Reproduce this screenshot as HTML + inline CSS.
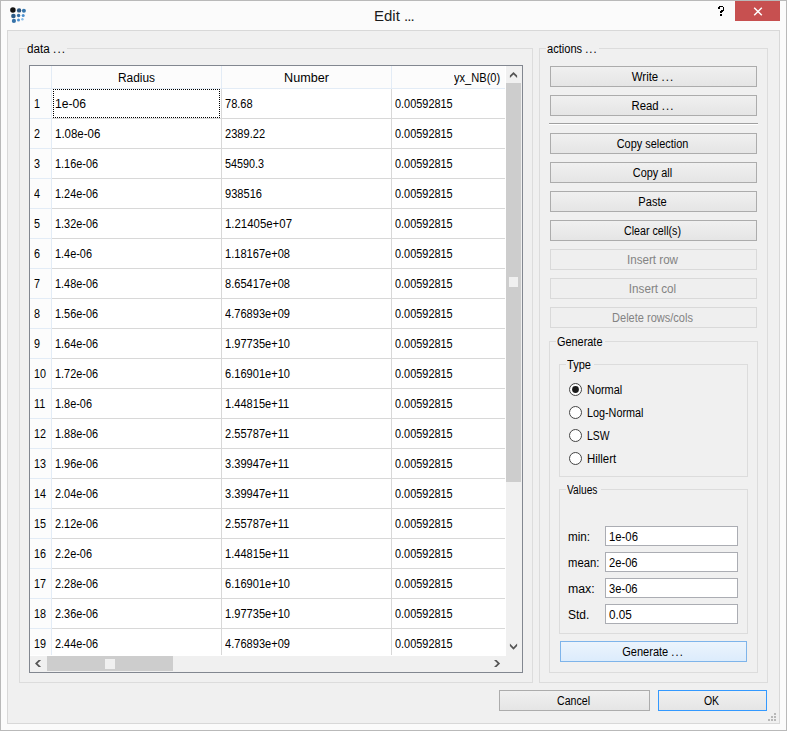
<!DOCTYPE html>
<html><head><meta charset="utf-8"><style>
html,body{margin:0;padding:0;width:787px;height:731px;overflow:hidden;background:#fbfbfb}
body>div{position:absolute}
.t{position:absolute;white-space:nowrap;font-family:"Liberation Sans",sans-serif;font-size:12px;line-height:15px;color:#000}
</style></head><body>
<div style="left:0px;top:0px;width:787px;height:731px;background:#fbfbfb;border:1px solid #b9b9b9;box-sizing:border-box"></div>
<svg width="787" height="40" style="position:absolute;left:0;top:0"><circle cx="12.9" cy="9.9" r="2.75" fill="#121212"/><circle cx="19.1" cy="10.4" r="2.2" fill="#2b5680"/><circle cx="23.9" cy="10.7" r="2.0" fill="#3676ac"/><circle cx="13.4" cy="16.0" r="2.3" fill="#2c5a86"/><circle cx="18.6" cy="15.5" r="1.7" fill="#336ea6"/><circle cx="23.2" cy="15.5" r="1.5" fill="#4a8fce"/><circle cx="13.9" cy="20.9" r="2.1" fill="#3672a8"/><circle cx="18.5" cy="20.0" r="1.5" fill="#4b8fcf"/><circle cx="22.4" cy="19.2" r="1.2" fill="#86bde9"/></svg>
<div class="t" style="left:374px;top:6px;font-size:15px;line-height:20px;color:#1b1b1b;">Edit <span style="letter-spacing:-0.9px">..</span>.</div>
<svg width="787" height="30" style="position:absolute;left:0;top:0" shape-rendering="crispEdges"><rect x="719" y="6" width="4" height="1" fill="#000"/><rect x="718" y="7" width="2" height="2" fill="#000"/><rect x="723" y="7" width="1" height="3" fill="#000"/><rect x="721" y="10" width="3" height="1" fill="#000"/><rect x="720" y="11" width="3" height="1" fill="#000"/><rect x="720" y="12" width="2" height="1" fill="#000"/><rect x="720" y="14" width="2" height="2" fill="#000"/></svg>
<div style="left:735px;top:1px;width:45px;height:20px;background:#c75050"></div>
<svg width="787" height="30" style="position:absolute;left:0;top:0"><path d="M754.2 7.8 L761.8 15.2 M761.8 7.8 L754.2 15.2" stroke="#fff" stroke-width="1.5"/></svg>
<div style="left:7px;top:30px;width:773px;height:694px;background:#f0f0f0;border:1px solid #d8d8d8;box-sizing:border-box"></div>
<svg width="787" height="731" style="position:absolute;left:0;top:0"><rect x="774" y="713" width="2" height="2" fill="#b8b8b8"/><rect x="771" y="716" width="2" height="2" fill="#b8b8b8"/><rect x="774" y="716" width="2" height="2" fill="#b8b8b8"/><rect x="768" y="719" width="2" height="2" fill="#b8b8b8"/><rect x="771" y="719" width="2" height="2" fill="#b8b8b8"/><rect x="774" y="719" width="2" height="2" fill="#b8b8b8"/></svg>
<div style="left:19px;top:48px;width:514px;height:635px;border:1px solid #dcdcdc;box-sizing:border-box"></div>
<div style="left:26px;top:47px;width:41px;height:3px;background:#f0f0f0"></div>
<div class="t" style="left:27px;top:42px;transform:scaleX(0.9730);transform-origin:0 0;">data <span style="letter-spacing:1.2px">..</span>.</div>
<div style="left:29px;top:65px;width:494px;height:608px;background:#fff;border:1px solid #828790;box-sizing:border-box"></div>
<div style="left:30px;top:66px;width:475px;height:23px;background:#fcfcfc"></div>
<div style="left:30px;top:88px;width:475px;height:1px;background:#e3ecf6"></div>
<div style="left:51px;top:66px;width:1px;height:22px;background:#e3ecf6"></div>
<div style="left:221px;top:66px;width:1px;height:22px;background:#e3ecf6"></div>
<div style="left:391px;top:66px;width:1px;height:22px;background:#e3ecf6"></div>
<div class="t" style="left:52px;top:71px;width:169px;text-align:center;transform:scaleX(0.9914);">Radius</div>
<div class="t" style="left:222px;top:71px;width:169px;text-align:center;transform:scaleX(1.0512);">Number</div>
<div class="t" style="left:454px;top:71px;transform:scaleX(0.9245);transform-origin:0 0;">yx_NB(0)</div>
<div style="left:30px;top:89px;width:21px;height:566px;background:#fcfcfc"></div>
<div style="left:51px;top:89px;width:1px;height:566px;background:#e3ecf6"></div>
<div style="left:30px;top:118px;width:21px;height:1px;background:#e3ecf6"></div>
<div style="left:52px;top:118px;width:453px;height:1px;background:#d8d8d8"></div>
<div class="t" style="left:34px;top:97px;transform:scaleX(0.8990);transform-origin:0 0;">1</div>
<div class="t" style="left:55px;top:97px;transform:scaleX(1.0107);transform-origin:0 0;">1e-06</div>
<div class="t" style="left:224.5px;top:97px;transform:scaleX(0.9207);transform-origin:0 0;">78.68</div>
<div class="t" style="left:395px;top:97px;transform:scaleX(0.9097);transform-origin:0 0;">0.00592815</div>
<div style="left:30px;top:148px;width:21px;height:1px;background:#e3ecf6"></div>
<div style="left:52px;top:148px;width:453px;height:1px;background:#d8d8d8"></div>
<div class="t" style="left:34px;top:127px;transform:scaleX(0.8990);transform-origin:0 0;">2</div>
<div class="t" style="left:55px;top:127px;transform:scaleX(0.9578);transform-origin:0 0;">1.08e-06</div>
<div class="t" style="left:224.5px;top:127px;transform:scaleX(0.9238);transform-origin:0 0;">2389.22</div>
<div class="t" style="left:395px;top:127px;transform:scaleX(0.9097);transform-origin:0 0;">0.00592815</div>
<div style="left:30px;top:178px;width:21px;height:1px;background:#e3ecf6"></div>
<div style="left:52px;top:178px;width:453px;height:1px;background:#d8d8d8"></div>
<div class="t" style="left:34px;top:157px;transform:scaleX(0.8990);transform-origin:0 0;">3</div>
<div class="t" style="left:55px;top:157px;transform:scaleX(0.9076);transform-origin:0 0;">1.16e-06</div>
<div class="t" style="left:224.5px;top:157px;transform:scaleX(0.8990);transform-origin:0 0;">54590.3</div>
<div class="t" style="left:395px;top:157px;transform:scaleX(0.9097);transform-origin:0 0;">0.00592815</div>
<div style="left:30px;top:208px;width:21px;height:1px;background:#e3ecf6"></div>
<div style="left:52px;top:208px;width:453px;height:1px;background:#d8d8d8"></div>
<div class="t" style="left:34px;top:187px;transform:scaleX(0.8990);transform-origin:0 0;">4</div>
<div class="t" style="left:55px;top:187px;transform:scaleX(0.9076);transform-origin:0 0;">1.24e-06</div>
<div class="t" style="left:224.5px;top:187px;transform:scaleX(0.9231);transform-origin:0 0;">938516</div>
<div class="t" style="left:395px;top:187px;transform:scaleX(0.9097);transform-origin:0 0;">0.00592815</div>
<div style="left:30px;top:238px;width:21px;height:1px;background:#e3ecf6"></div>
<div style="left:52px;top:238px;width:453px;height:1px;background:#d8d8d8"></div>
<div class="t" style="left:34px;top:217px;transform:scaleX(0.8990);transform-origin:0 0;">5</div>
<div class="t" style="left:55px;top:217px;transform:scaleX(0.9076);transform-origin:0 0;">1.32e-06</div>
<div class="t" style="left:224.5px;top:217px;transform:scaleX(0.9515);transform-origin:0 0;">1.21405e+07</div>
<div class="t" style="left:395px;top:217px;transform:scaleX(0.9097);transform-origin:0 0;">0.00592815</div>
<div style="left:30px;top:268px;width:21px;height:1px;background:#e3ecf6"></div>
<div style="left:52px;top:268px;width:453px;height:1px;background:#d8d8d8"></div>
<div class="t" style="left:34px;top:247px;transform:scaleX(0.8990);transform-origin:0 0;">6</div>
<div class="t" style="left:55px;top:247px;transform:scaleX(0.9090);transform-origin:0 0;">1.4e-06</div>
<div class="t" style="left:224.5px;top:247px;transform:scaleX(0.9232);transform-origin:0 0;">1.18167e+08</div>
<div class="t" style="left:395px;top:247px;transform:scaleX(0.9097);transform-origin:0 0;">0.00592815</div>
<div style="left:30px;top:298px;width:21px;height:1px;background:#e3ecf6"></div>
<div style="left:52px;top:298px;width:453px;height:1px;background:#d8d8d8"></div>
<div class="t" style="left:34px;top:277px;transform:scaleX(0.8990);transform-origin:0 0;">7</div>
<div class="t" style="left:55px;top:277px;transform:scaleX(0.9076);transform-origin:0 0;">1.48e-06</div>
<div class="t" style="left:224.5px;top:277px;transform:scaleX(0.9232);transform-origin:0 0;">8.65417e+08</div>
<div class="t" style="left:395px;top:277px;transform:scaleX(0.9097);transform-origin:0 0;">0.00592815</div>
<div style="left:30px;top:328px;width:21px;height:1px;background:#e3ecf6"></div>
<div style="left:52px;top:328px;width:453px;height:1px;background:#d8d8d8"></div>
<div class="t" style="left:34px;top:307px;transform:scaleX(0.8990);transform-origin:0 0;">8</div>
<div class="t" style="left:55px;top:307px;transform:scaleX(0.9076);transform-origin:0 0;">1.56e-06</div>
<div class="t" style="left:224.5px;top:307px;transform:scaleX(0.9232);transform-origin:0 0;">4.76893e+09</div>
<div class="t" style="left:395px;top:307px;transform:scaleX(0.9097);transform-origin:0 0;">0.00592815</div>
<div style="left:30px;top:358px;width:21px;height:1px;background:#e3ecf6"></div>
<div style="left:52px;top:358px;width:453px;height:1px;background:#d8d8d8"></div>
<div class="t" style="left:34px;top:337px;transform:scaleX(0.8990);transform-origin:0 0;">9</div>
<div class="t" style="left:55px;top:337px;transform:scaleX(0.9076);transform-origin:0 0;">1.64e-06</div>
<div class="t" style="left:224.5px;top:337px;transform:scaleX(0.9232);transform-origin:0 0;">1.97735e+10</div>
<div class="t" style="left:395px;top:337px;transform:scaleX(0.9097);transform-origin:0 0;">0.00592815</div>
<div style="left:30px;top:388px;width:21px;height:1px;background:#e3ecf6"></div>
<div style="left:52px;top:388px;width:453px;height:1px;background:#d8d8d8"></div>
<div class="t" style="left:34px;top:367px;transform:scaleX(0.8990);transform-origin:0 0;">10</div>
<div class="t" style="left:55px;top:367px;transform:scaleX(0.9076);transform-origin:0 0;">1.72e-06</div>
<div class="t" style="left:224.5px;top:367px;transform:scaleX(0.9232);transform-origin:0 0;">6.16901e+10</div>
<div class="t" style="left:395px;top:367px;transform:scaleX(0.9097);transform-origin:0 0;">0.00592815</div>
<div style="left:30px;top:418px;width:21px;height:1px;background:#e3ecf6"></div>
<div style="left:52px;top:418px;width:453px;height:1px;background:#d8d8d8"></div>
<div class="t" style="left:34px;top:397px;transform:scaleX(0.8990);transform-origin:0 0;">11</div>
<div class="t" style="left:55px;top:397px;transform:scaleX(0.9090);transform-origin:0 0;">1.8e-06</div>
<div class="t" style="left:224.5px;top:397px;transform:scaleX(0.9232);transform-origin:0 0;">1.44815e+11</div>
<div class="t" style="left:395px;top:397px;transform:scaleX(0.9097);transform-origin:0 0;">0.00592815</div>
<div style="left:30px;top:448px;width:21px;height:1px;background:#e3ecf6"></div>
<div style="left:52px;top:448px;width:453px;height:1px;background:#d8d8d8"></div>
<div class="t" style="left:34px;top:427px;transform:scaleX(0.8990);transform-origin:0 0;">12</div>
<div class="t" style="left:55px;top:427px;transform:scaleX(0.9076);transform-origin:0 0;">1.88e-06</div>
<div class="t" style="left:224.5px;top:427px;transform:scaleX(0.9232);transform-origin:0 0;">2.55787e+11</div>
<div class="t" style="left:395px;top:427px;transform:scaleX(0.9097);transform-origin:0 0;">0.00592815</div>
<div style="left:30px;top:478px;width:21px;height:1px;background:#e3ecf6"></div>
<div style="left:52px;top:478px;width:453px;height:1px;background:#d8d8d8"></div>
<div class="t" style="left:34px;top:457px;transform:scaleX(0.8990);transform-origin:0 0;">13</div>
<div class="t" style="left:55px;top:457px;transform:scaleX(0.9076);transform-origin:0 0;">1.96e-06</div>
<div class="t" style="left:224.5px;top:457px;transform:scaleX(0.9232);transform-origin:0 0;">3.39947e+11</div>
<div class="t" style="left:395px;top:457px;transform:scaleX(0.9097);transform-origin:0 0;">0.00592815</div>
<div style="left:30px;top:508px;width:21px;height:1px;background:#e3ecf6"></div>
<div style="left:52px;top:508px;width:453px;height:1px;background:#d8d8d8"></div>
<div class="t" style="left:34px;top:487px;transform:scaleX(0.8990);transform-origin:0 0;">14</div>
<div class="t" style="left:55px;top:487px;transform:scaleX(0.9076);transform-origin:0 0;">2.04e-06</div>
<div class="t" style="left:224.5px;top:487px;transform:scaleX(0.9232);transform-origin:0 0;">3.39947e+11</div>
<div class="t" style="left:395px;top:487px;transform:scaleX(0.9097);transform-origin:0 0;">0.00592815</div>
<div style="left:30px;top:538px;width:21px;height:1px;background:#e3ecf6"></div>
<div style="left:52px;top:538px;width:453px;height:1px;background:#d8d8d8"></div>
<div class="t" style="left:34px;top:517px;transform:scaleX(0.8990);transform-origin:0 0;">15</div>
<div class="t" style="left:55px;top:517px;transform:scaleX(0.9076);transform-origin:0 0;">2.12e-06</div>
<div class="t" style="left:224.5px;top:517px;transform:scaleX(0.9232);transform-origin:0 0;">2.55787e+11</div>
<div class="t" style="left:395px;top:517px;transform:scaleX(0.9097);transform-origin:0 0;">0.00592815</div>
<div style="left:30px;top:568px;width:21px;height:1px;background:#e3ecf6"></div>
<div style="left:52px;top:568px;width:453px;height:1px;background:#d8d8d8"></div>
<div class="t" style="left:34px;top:547px;transform:scaleX(0.8990);transform-origin:0 0;">16</div>
<div class="t" style="left:55px;top:547px;transform:scaleX(0.9090);transform-origin:0 0;">2.2e-06</div>
<div class="t" style="left:224.5px;top:547px;transform:scaleX(0.9232);transform-origin:0 0;">1.44815e+11</div>
<div class="t" style="left:395px;top:547px;transform:scaleX(0.9097);transform-origin:0 0;">0.00592815</div>
<div style="left:30px;top:598px;width:21px;height:1px;background:#e3ecf6"></div>
<div style="left:52px;top:598px;width:453px;height:1px;background:#d8d8d8"></div>
<div class="t" style="left:34px;top:577px;transform:scaleX(0.8990);transform-origin:0 0;">17</div>
<div class="t" style="left:55px;top:577px;transform:scaleX(0.9076);transform-origin:0 0;">2.28e-06</div>
<div class="t" style="left:224.5px;top:577px;transform:scaleX(0.9232);transform-origin:0 0;">6.16901e+10</div>
<div class="t" style="left:395px;top:577px;transform:scaleX(0.9097);transform-origin:0 0;">0.00592815</div>
<div style="left:30px;top:628px;width:21px;height:1px;background:#e3ecf6"></div>
<div style="left:52px;top:628px;width:453px;height:1px;background:#d8d8d8"></div>
<div class="t" style="left:34px;top:607px;transform:scaleX(0.8990);transform-origin:0 0;">18</div>
<div class="t" style="left:55px;top:607px;transform:scaleX(0.9076);transform-origin:0 0;">2.36e-06</div>
<div class="t" style="left:224.5px;top:607px;transform:scaleX(0.9232);transform-origin:0 0;">1.97735e+10</div>
<div class="t" style="left:395px;top:607px;transform:scaleX(0.9097);transform-origin:0 0;">0.00592815</div>
<div class="t" style="left:34px;top:637px;transform:scaleX(0.8990);transform-origin:0 0;">19</div>
<div class="t" style="left:55px;top:637px;transform:scaleX(0.9076);transform-origin:0 0;">2.44e-06</div>
<div class="t" style="left:224.5px;top:637px;transform:scaleX(0.9232);transform-origin:0 0;">4.76893e+09</div>
<div class="t" style="left:395px;top:637px;transform:scaleX(0.9097);transform-origin:0 0;">0.00592815</div>
<div style="left:221px;top:89px;width:1px;height:566px;background:#d8d8d8"></div>
<div style="left:391px;top:89px;width:1px;height:566px;background:#d8d8d8"></div>
<div style="left:53px;top:89px;width:167px;height:29px;border:1px dotted #000;box-sizing:border-box"></div>
<div style="left:506px;top:66px;width:16px;height:590px;background:#f0f0f0"></div>
<div style="left:506px;top:83px;width:15px;height:399px;background:#cdcdcd"></div>
<div style="left:509px;top:277px;width:9px;height:10px;background:#f0f0f0"></div>
<div style="left:30px;top:656px;width:492px;height:16px;background:#f0f0f0"></div>
<div style="left:47px;top:656px;width:126px;height:15px;background:#cdcdcd"></div>
<div style="left:105px;top:659px;width:10px;height:10px;background:#f0f0f0"></div>
<svg width="787" height="731" style="position:absolute;left:0;top:0" fill="#555"><path d="M513.5 71.9 L517.1 75.5 L517.1 78 L513.5 74.4 L509.9 78 L509.9 75.5 Z"/><path d="M509.9 643.6 L509.9 646.1 L513.5 649.7 L517.1 646.1 L517.1 643.6 L513.5 647.2 Z"/><path d="M35 663.5 L38.6 659.9 L41.1 659.9 L37.5 663.5 L41.1 667.1 L38.6 667.1 Z"/><path d="M500.1 663.5 L496.5 659.9 L494 659.9 L497.6 663.5 L494 667.1 L496.5 667.1 Z"/></svg>
<div style="left:539px;top:48px;width:229px;height:635px;border:1px solid #dcdcdc;box-sizing:border-box"></div>
<div style="left:546px;top:47px;width:53px;height:3px;background:#f0f0f0"></div>
<div class="t" style="left:547px;top:42px;transform:scaleX(0.9231);transform-origin:0 0;">actions <span style="letter-spacing:1.2px">..</span>.</div>
<div style="left:550px;top:66px;width:207px;height:21px;border:1px solid #acacac;background:linear-gradient(#f0f0f0,#e5e5e5);box-sizing:border-box"></div>
<div class="t" style="left:549px;top:70px;width:207px;text-align:center;transform:scaleX(0.9524);color:#000">Write <span style="letter-spacing:1.2px">..</span>.</div>
<div style="left:550px;top:95px;width:207px;height:21px;border:1px solid #acacac;background:linear-gradient(#f0f0f0,#e5e5e5);box-sizing:border-box"></div>
<div class="t" style="left:549px;top:99px;width:207px;text-align:center;transform:scaleX(0.9452);color:#000">Read <span style="letter-spacing:1.2px">..</span>.</div>
<div style="left:550px;top:133px;width:207px;height:21px;border:1px solid #acacac;background:linear-gradient(#f0f0f0,#e5e5e5);box-sizing:border-box"></div>
<div class="t" style="left:549px;top:137px;width:207px;text-align:center;transform:scaleX(0.9091);color:#000">Copy selection</div>
<div style="left:550px;top:162px;width:207px;height:21px;border:1px solid #acacac;background:linear-gradient(#f0f0f0,#e5e5e5);box-sizing:border-box"></div>
<div class="t" style="left:549px;top:166px;width:207px;text-align:center;transform:scaleX(0.9071);color:#000">Copy all</div>
<div style="left:550px;top:191px;width:207px;height:21px;border:1px solid #acacac;background:linear-gradient(#f0f0f0,#e5e5e5);box-sizing:border-box"></div>
<div class="t" style="left:549px;top:195px;width:207px;text-align:center;transform:scaleX(0.9241);color:#000">Paste</div>
<div style="left:550px;top:220px;width:207px;height:21px;border:1px solid #acacac;background:linear-gradient(#f0f0f0,#e5e5e5);box-sizing:border-box"></div>
<div class="t" style="left:549px;top:224px;width:207px;text-align:center;transform:scaleX(0.8905);color:#000">Clear cell(s)</div>
<div style="left:550px;top:249px;width:207px;height:21px;border:1px solid #d9d9d9;background:#efefef;box-sizing:border-box"></div>
<div class="t" style="left:549px;top:253px;width:207px;text-align:center;transform:scaleX(0.9686);color:#838383">Insert row</div>
<div style="left:550px;top:278px;width:207px;height:21px;border:1px solid #d9d9d9;background:#efefef;box-sizing:border-box"></div>
<div class="t" style="left:549px;top:282px;width:207px;text-align:center;transform:scaleX(0.9739);color:#838383">Insert col</div>
<div style="left:550px;top:307px;width:207px;height:21px;border:1px solid #d9d9d9;background:#efefef;box-sizing:border-box"></div>
<div class="t" style="left:549px;top:311px;width:207px;text-align:center;transform:scaleX(0.9186);color:#838383">Delete rows/cols</div>
<div style="left:549px;top:123px;width:209px;height:1px;background:#a0a0a0"></div>
<div style="left:549px;top:124px;width:209px;height:1px;background:#ffffff"></div>
<div style="left:549px;top:341px;width:209px;height:332px;border:1px solid #dcdcdc;box-sizing:border-box"></div>
<div style="left:556px;top:340px;width:49px;height:3px;background:#f0f0f0"></div>
<div class="t" style="left:557px;top:335px;transform:scaleX(0.9082);transform-origin:0 0;">Generate</div>
<div style="left:559px;top:364px;width:189px;height:113px;border:1px solid #dcdcdc;box-sizing:border-box"></div>
<div style="left:566px;top:363px;width:28px;height:3px;background:#f0f0f0"></div>
<div class="t" style="left:567px;top:358px;transform:scaleX(0.9200);transform-origin:0 0;">Type</div>
<svg width="787" height="731" style="position:absolute;left:0;top:0"><circle cx="575.5" cy="389.5" r="6" fill="#fff" stroke="#444" stroke-width="1"/><circle cx="575.5" cy="389.5" r="3.4" fill="#1c1c1c"/><circle cx="575.5" cy="412.5" r="6" fill="#fff" stroke="#444" stroke-width="1"/><circle cx="575.5" cy="435.5" r="6" fill="#fff" stroke="#444" stroke-width="1"/><circle cx="575.5" cy="458.5" r="6" fill="#fff" stroke="#444" stroke-width="1"/></svg>
<div class="t" style="left:587px;top:383px;transform:scaleX(0.9111);transform-origin:0 0;">Normal</div>
<div class="t" style="left:587px;top:406px;transform:scaleX(0.9000);transform-origin:0 0;">Log-Normal</div>
<div class="t" style="left:587px;top:429px;transform:scaleX(0.8625);transform-origin:0 0;">LSW</div>
<div class="t" style="left:587px;top:452px;transform:scaleX(0.9517);transform-origin:0 0;">Hillert</div>
<div style="left:559px;top:489px;width:189px;height:145px;border:1px solid #dcdcdc;box-sizing:border-box"></div>
<div style="left:566px;top:488px;width:35px;height:3px;background:#f0f0f0"></div>
<div class="t" style="left:567px;top:483px;transform:scaleX(0.8486);transform-origin:0 0;">Values</div>
<div class="t" style="left:568px;top:530px;transform:scaleX(0.9750);transform-origin:0 0;">min:</div>
<div style="left:605px;top:526px;width:133px;height:20px;background:#fff;border:1px solid #abadb3;box-sizing:border-box"></div>
<div class="t" style="left:609px;top:530px;transform:scaleX(0.9429);transform-origin:0 0;">1e-06</div>
<div class="t" style="left:568px;top:556px;transform:scaleX(0.9387);transform-origin:0 0;">mean:</div>
<div style="left:605px;top:552px;width:133px;height:20px;background:#fff;border:1px solid #abadb3;box-sizing:border-box"></div>
<div class="t" style="left:609px;top:556px;transform:scaleX(0.9310);transform-origin:0 0;">2e-06</div>
<div class="t" style="left:568px;top:582px;transform:scaleX(1.0261);transform-origin:0 0;">max:</div>
<div style="left:605px;top:578px;width:133px;height:20px;background:#fff;border:1px solid #abadb3;box-sizing:border-box"></div>
<div class="t" style="left:609px;top:582px;transform:scaleX(0.9310);transform-origin:0 0;">3e-06</div>
<div class="t" style="left:568px;top:608px;transform:scaleX(1.0000);transform-origin:0 0;">Std.</div>
<div style="left:605px;top:604px;width:133px;height:20px;background:#fff;border:1px solid #abadb3;box-sizing:border-box"></div>
<div class="t" style="left:609px;top:608px;transform:scaleX(0.9773);transform-origin:0 0;">0.05</div>
<div style="left:560px;top:641px;width:187px;height:21px;border:1px solid #7eb4ea;background:linear-gradient(#ecf4fc,#dcecfc);box-sizing:border-box"></div>
<div class="t" style="left:559px;top:645px;width:187px;text-align:center;transform:scaleX(0.9187);color:#000">Generate <span style="letter-spacing:1.2px">..</span>.</div>
<div style="left:499px;top:690px;width:151px;height:21px;border:1px solid #acacac;background:linear-gradient(#f0f0f0,#e5e5e5);box-sizing:border-box"></div>
<div class="t" style="left:498px;top:694px;width:151px;text-align:center;transform:scaleX(0.8833);color:#000">Cancel</div>
<div style="left:658px;top:690px;width:109px;height:21px;border:1px solid #3399ff;background:linear-gradient(#f0f0f0,#e5e5e5);box-sizing:border-box"></div>
<div class="t" style="left:657px;top:694px;width:109px;text-align:center;transform:scaleX(0.8750);color:#000">OK</div>
</body></html>
